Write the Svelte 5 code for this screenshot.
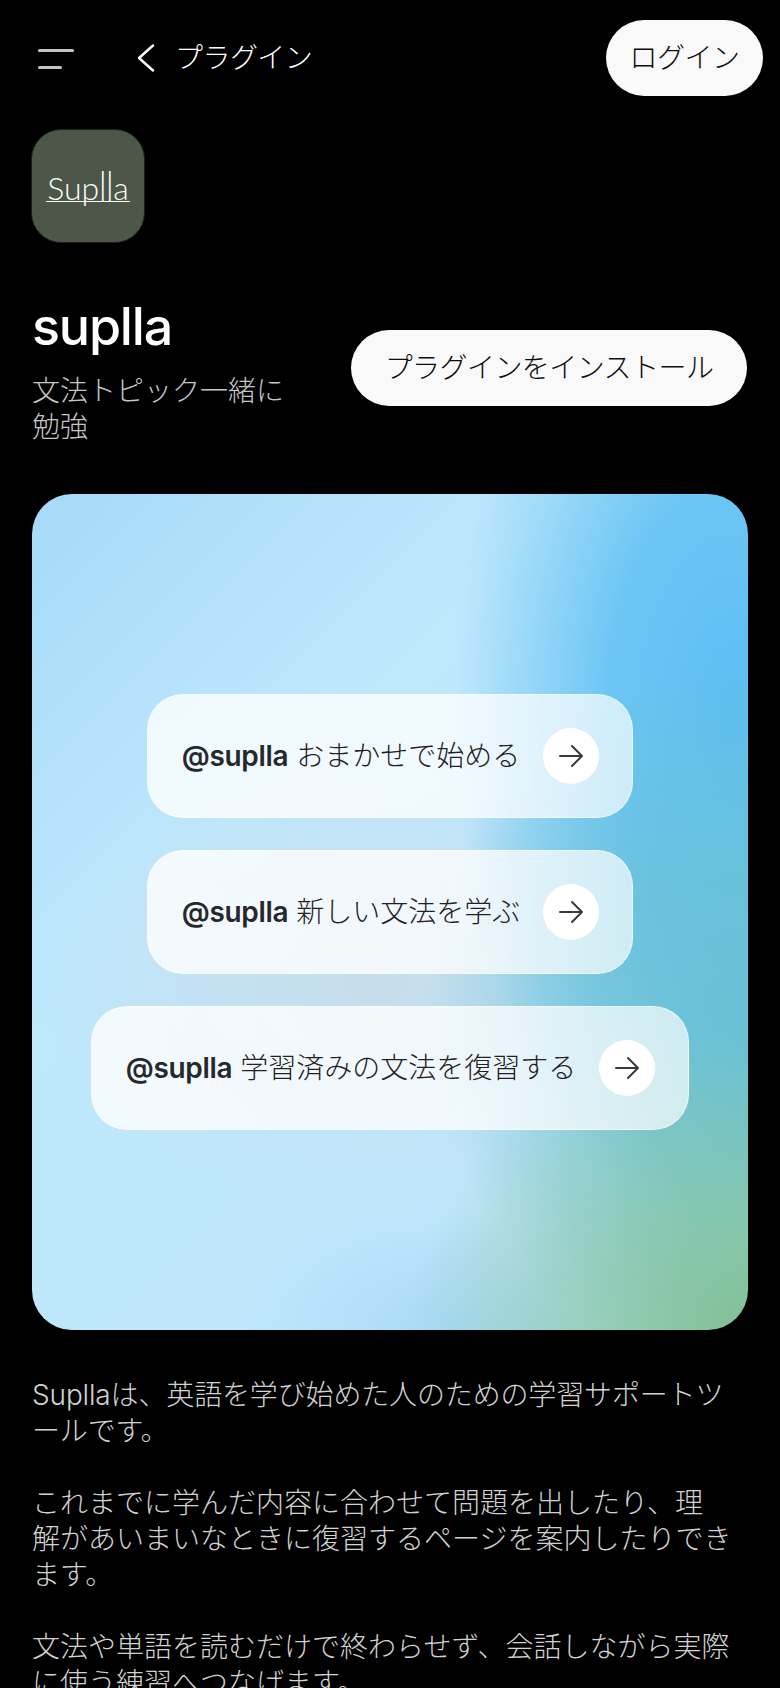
<script>
  const prompts = [
    { text: "おまかせで始める" },
    { text: "新しい文法を学ぶ" },
    { text: "学習済みの文法を復習する" }
  ];
  const paragraphs = [
    "Supllaは、英語を学び始めた人のための学習サポートツールです。",
    "これまでに学んだ内容に合わせて問題を出したり、理\n解があいまいなときに復習するページを案内したりできます。",
    "文法や単語を読むだけで終わらせず、会話しながら実際に使う練習へつなげます。"
  ];
</script>

<div class="page" lang="ja">
  <header class="top">
    <button class="menu" aria-label="メニュー">
      <span class="bar long"></span>
      <span class="bar short"></span>
    </button>
    <button class="back">
      <svg width="20" height="28" viewBox="0 0 20 28" fill="none" aria-hidden="true">
        <path d="M17 1.5 3 14l14 12.5" stroke="#fff" stroke-width="2.4" stroke-linecap="round" stroke-linejoin="round" />
      </svg>
      <span>プラグイン</span>
    </button>
    <button class="pill login">ログイン</button>
  </header>

  <div class="logo">
    <span class="logo-word">Sup<span class="tall">ll</span>a</span>
  </div>

  <section class="intro">
    <div class="intro-text">
      <h1>suplla</h1>
      <p>文法トピック一緒に勉強</p>
    </div>
    <button class="pill install">プラグインをインストール</button>
  </section>

  <section class="hero">
    {#each prompts as prompt}
      <button class="prompt">
        <span class="prompt-text"><b>@suplla</b> {prompt.text}</span>
        <span class="arrow">
          <svg width="26" height="26" viewBox="0 0 26 26" fill="none" aria-hidden="true">
            <path d="M2 13h22M14 3l10 10-10 10" stroke="#3a3a3a" stroke-width="2" stroke-linecap="round" stroke-linejoin="round" />
          </svg>
        </span>
      </button>
    {/each}
  </section>

  <section class="about">
    {#each paragraphs as para}
      <p>{para}</p>
    {/each}
  </section>
</div>

<style>
  :global(body) {
    background: #000;
  }

  .page {
    height: 1688px;
    overflow: hidden;
    background: #000;
    color: #fff;
    font-family: Inter, "Noto Sans CJK JP", sans-serif;
    font-size: 28px;
    font-weight: 300;
    line-height: 36px;
  }

  button {
    border: 0;
    padding: 0;
    background: none;
    color: inherit;
    font: inherit;
  }

  .top {
    display: flex;
    align-items: center;
    padding: 20px 17px 0 38px;
  }

  .menu {
    display: flex;
    flex-direction: column;
    gap: 14px;
    width: 36px;
    margin-top: 2px;
  }

  .bar {
    display: block;
    height: 3px;
    border-radius: 2px;
    background: #c4c4c4;
  }

  .bar.long {
    width: 36px;
  }

  .bar.short {
    width: 24px;
  }

  .back {
    display: flex;
    align-items: center;
    gap: 19px;
    margin-left: 62px;
    letter-spacing: -0.56px;
  }

  .pill {
    height: 76px;
    border-radius: 38px;
    background: #f9f9f9;
    color: #0c0c0c;
    text-align: center;
    letter-spacing: -0.56px;
  }

  .login {
    width: 157px;
    margin-left: auto;
  }

  .logo {
    display: flex;
    align-items: center;
    justify-content: center;
    box-sizing: border-box;
    width: 114px;
    height: 114px;
    margin: 33px 0 0 31px;
    border: 1px solid #1c1f1b;
    border-radius: 30px;
    background: #4c5649;
  }

  .logo-word {
    padding: 0 1px;
    margin-top: 3px;
    border-bottom: 1.5px solid #fbfcf8;
    color: #fbfcf8;
    font-family: Lato, sans-serif;
    font-size: 32px;
    font-weight: 300;
    line-height: 27px;
  }

  .tall {
    display: inline-block;
    transform: scaleY(1.38);
    transform-origin: 50% 80%;
  }

  .intro {
    display: flex;
    align-items: center;
    justify-content: space-between;
    padding: 54px 33px 0 32px;
  }

  .intro-text {
    width: 262px;
  }

  h1 {
    margin: 0 0 16px;
    font-size: 52px;
    font-weight: 500;
    line-height: 60px;
    letter-spacing: -1.2px;
  }

  .intro-text p {
    margin: 0;
    color: #c6c6c6;
  }

  .install {
    width: 396px;
    margin-top: -6px;
  }

  .hero {
    display: flex;
    flex-direction: column;
    align-items: center;
    justify-content: center;
    gap: 32px;
    box-sizing: border-box;
    height: 836px;
    margin: 49px 32px 0;
    border-radius: 40px;
    background:
      radial-gradient(340px 300px at 100% 100%, #7fc093 0%, rgba(127, 192, 147, 0.6) 45%, rgba(127, 192, 147, 0) 100%),
      radial-gradient(320px 360px at 100% 62%, #68c0d4 0%, rgba(104, 192, 212, 0.7) 45%, rgba(104, 192, 212, 0) 100%),
      radial-gradient(280px 520px at 98% 26%, #5bbef3 0%, rgba(91, 190, 243, 0.82) 45%, rgba(91, 190, 243, 0) 100%),
      radial-gradient(340px 220px at 48% 58%, #c6dcea 0%, rgba(198, 220, 234, 0) 100%),
      radial-gradient(200px 120px at 58% 100%, #a8daf8 0%, rgba(168, 218, 248, 0) 100%),
      linear-gradient(135deg, #a6daf8 0%, #bfe8fc 35%, #bfe6fb 70%, #c4e6fb 100%);
  }

  .prompt {
    display: flex;
    align-items: center;
    gap: 23px;
    box-sizing: border-box;
    height: 124px;
    padding: 0 33px 0 34px;
    border: 1.5px solid rgba(255, 255, 255, 0.55);
    border-radius: 36px;
    background: linear-gradient(90deg, rgba(255, 255, 255, 0.8) 0%, rgba(255, 255, 255, 0.78) 55%, rgba(255, 255, 255, 0.68) 100%);
    color: #1f2125;
    font-weight: 300;
    white-space: nowrap;
  }

  .prompt b {
    color: #26282c;
    font-weight: 600;
    letter-spacing: -0.3px;
  }

  .arrow {
    display: flex;
    align-items: center;
    justify-content: center;
    flex: none;
    width: 56px;
    height: 56px;
    border-radius: 50%;
    background: #fff;
  }

  .about {
    padding: 47px 32px 0;
    color: #d2d2d2;
    white-space: pre-line;
  }

  .about p {
    margin: 0 0 36px;
  }

  .about p:first-child {
    letter-spacing: -0.15px;
  }
</style>
